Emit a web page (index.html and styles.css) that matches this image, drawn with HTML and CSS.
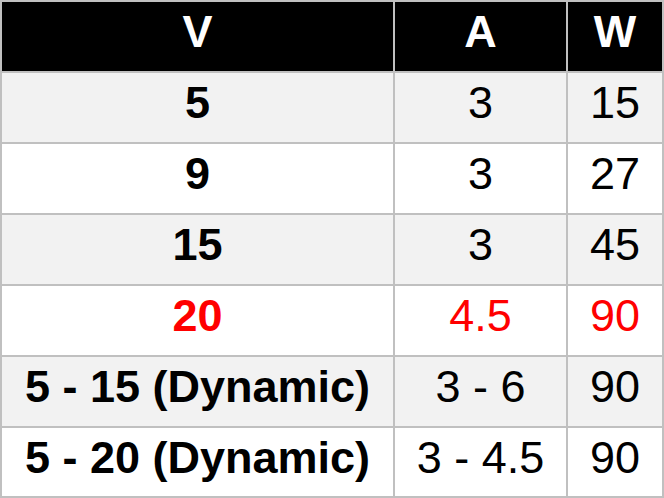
FILE: index.html
```html
<!DOCTYPE html>
<html lang="en">
<head>
<meta charset="utf-8">
<title>V A W table</title>
<link rel="stylesheet" href="styles.css">
</head>
<body>
<div class="table">
  <div class="cell head">V</div>
  <div class="cell head">A</div>
  <div class="cell head">W</div>

  <div class="cell shade strong">5</div>
  <div class="cell shade">3</div>
  <div class="cell shade">15</div>

  <div class="cell strong">9</div>
  <div class="cell">3</div>
  <div class="cell">27</div>

  <div class="cell shade strong">15</div>
  <div class="cell shade">3</div>
  <div class="cell shade">45</div>

  <div class="cell strong red">20</div>
  <div class="cell red">4.5</div>
  <div class="cell red">90</div>

  <div class="cell shade strong">5 - 15 (Dynamic)</div>
  <div class="cell shade">3 - 6</div>
  <div class="cell shade">90</div>

  <div class="cell strong">5 - 20 (Dynamic)</div>
  <div class="cell">3 - 4.5</div>
  <div class="cell">90</div>
</div>
</body>
</html>
```
FILE: styles.css
```css
html, body {
  margin: 0;
  padding: 0;
  background: #ffffff;
  overflow: hidden;
}

.table {
  display: grid;
  grid-template-columns: 391px 171px 94px;
  grid-template-rows: repeat(6, 69px) 68px;
  gap: 2px;
  padding: 2px;
  width: 664px;
  box-sizing: border-box;
  background: #c0c0c0;
  font-family: "Liberation Sans", Arial, sans-serif;
  font-size: 45px;
  color: #000000;
}

.cell {
  display: flex;
  align-items: center;
  justify-content: center;
  background: #ffffff;
  padding-bottom: 9px;
  box-sizing: border-box;
  white-space: nowrap;
}

.head {
  background: #000000;
  color: #ffffff;
  font-weight: bold;
}

.shade {
  background: #f2f2f2;
}

.strong {
  font-weight: bold;
}

.red {
  color: #ff0000;
}
```
